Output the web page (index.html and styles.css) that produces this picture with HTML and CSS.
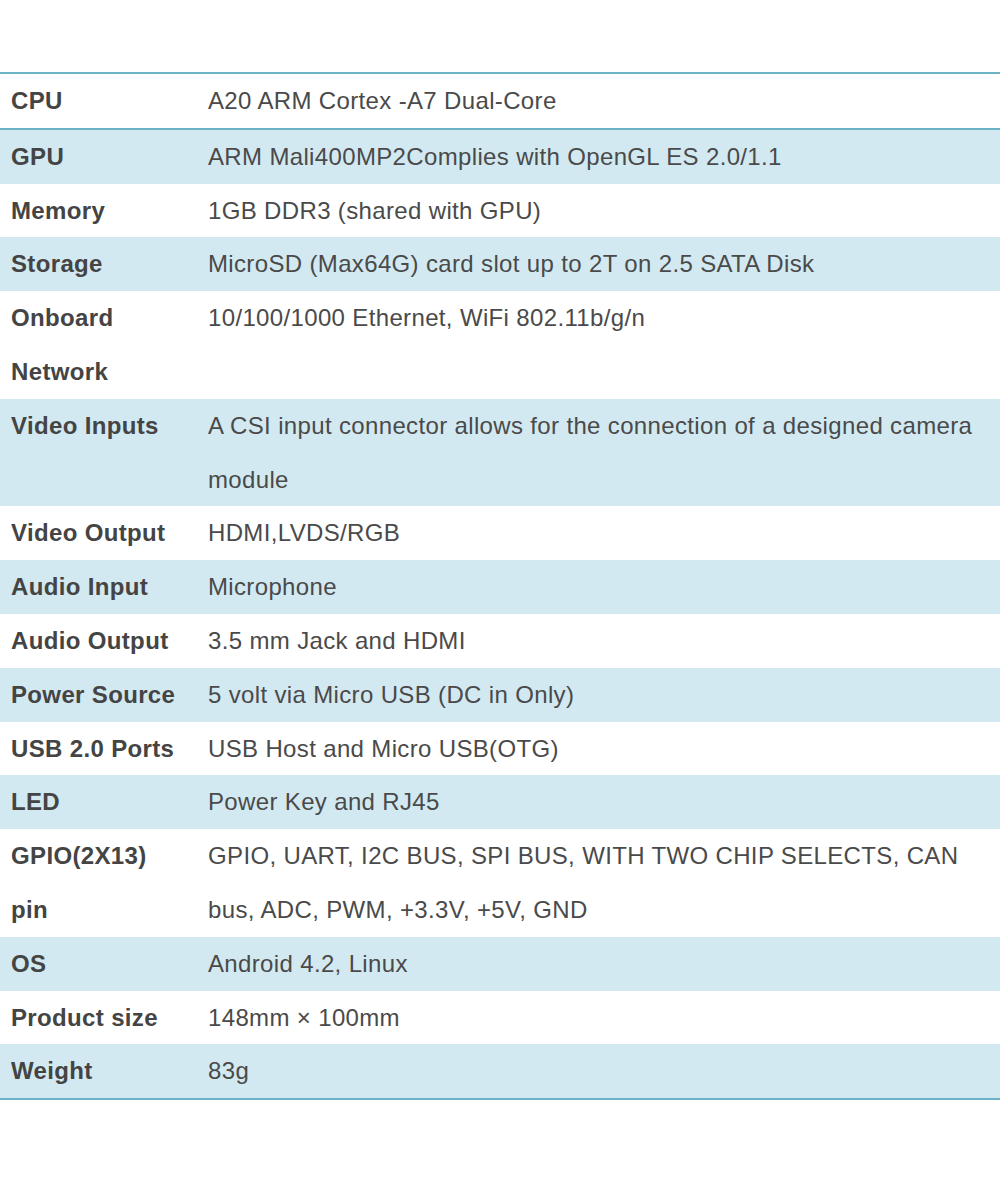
FILE: index.html
```
<html lang="en">
<head>
  <meta charset="UTF-8">
  <title>Specifications</title>
  <link rel="stylesheet" href="styles.css">
</head>
<body>

  <!-- Spec table -->
  <table class="specs">
    <tr class="first">
      <th>CPU</th>
      <td>A20 ARM Cortex -A7 Dual-Core</td>
    </tr>
    <tr class="alt">
      <th>GPU</th>
      <td>ARM Mali400MP2Complies with OpenGL ES 2.0/1.1</td>
    </tr>
    <tr>
      <th>Memory</th>
      <td>1GB DDR3 (shared with GPU)</td>
    </tr>
    <tr class="alt">
      <th>Storage</th>
      <td>MicroSD (Max64G) card slot up to 2T on 2.5 SATA Disk</td>
    </tr>
    <tr>
      <th>Onboard Network</th>
      <td>10/100/1000 Ethernet, WiFi 802.11b/g/n</td>
    </tr>
    <tr class="alt">
      <th>Video Inputs</th>
      <td>A CSI input connector allows for the connection of a designed camera module</td>
    </tr>
    <tr>
      <th>Video Output</th>
      <td>HDMI,LVDS/RGB</td>
    </tr>
    <tr class="alt">
      <th>Audio Input</th>
      <td>Microphone</td>
    </tr>
    <tr>
      <th>Audio Output</th>
      <td>3.5 mm Jack and HDMI</td>
    </tr>
    <tr class="alt">
      <th>Power Source</th>
      <td>5 volt via Micro USB (DC in Only)</td>
    </tr>
    <tr>
      <th>USB 2.0 Ports</th>
      <td>USB Host and Micro USB(OTG)</td>
    </tr>
    <tr class="alt">
      <th>LED</th>
      <td>Power Key and RJ45</td>
    </tr>
    <tr>
      <th>GPIO(2X13) pin</th>
      <td>GPIO, UART, I2C BUS, SPI BUS, WITH TWO CHIP SELECTS, CAN bus, ADC, PWM, +3.3V, +5V, GND</td>
    </tr>
    <tr class="alt">
      <th>OS</th>
      <td>Android 4.2, Linux</td>
    </tr>
    <tr>
      <th>Product size</th>
      <td>148mm × 100mm</td>
    </tr>
    <tr class="alt">
      <th>Weight</th>
      <td>83g</td>
    </tr>
  </table>

</body>
</html>
```

FILE: styles.css
```
html,
body {
  background-color: #fff;
  font-family: "Liberation Sans", Arial, sans-serif;
  margin: 0;
}

.specs {
  border-collapse: collapse;
  border-top: 2px solid #6cb2c6;
  border-bottom: 2px solid #6cb2c6;
  margin-top: 72px;
  width: 1000px;
  font-size: 24px;
  letter-spacing: 0.35px;
  line-height: 53.8px;
  table-layout: fixed;
}

.specs th,
.specs td {
  padding: 0;
  vertical-align: top;
  text-align: left;
}

.specs th {
  color: #444;
  font-weight: bold;
  padding: 0 20px 0 11px;
  width: 177px;
}

.specs td {
  color: #4a4a4a;
  padding-right: 18px;
}

.specs tr.first {
  border-bottom: 2px solid #6cb2c6;
}

.specs tr.alt {
  background-color: #d3e9f1;
}
```
